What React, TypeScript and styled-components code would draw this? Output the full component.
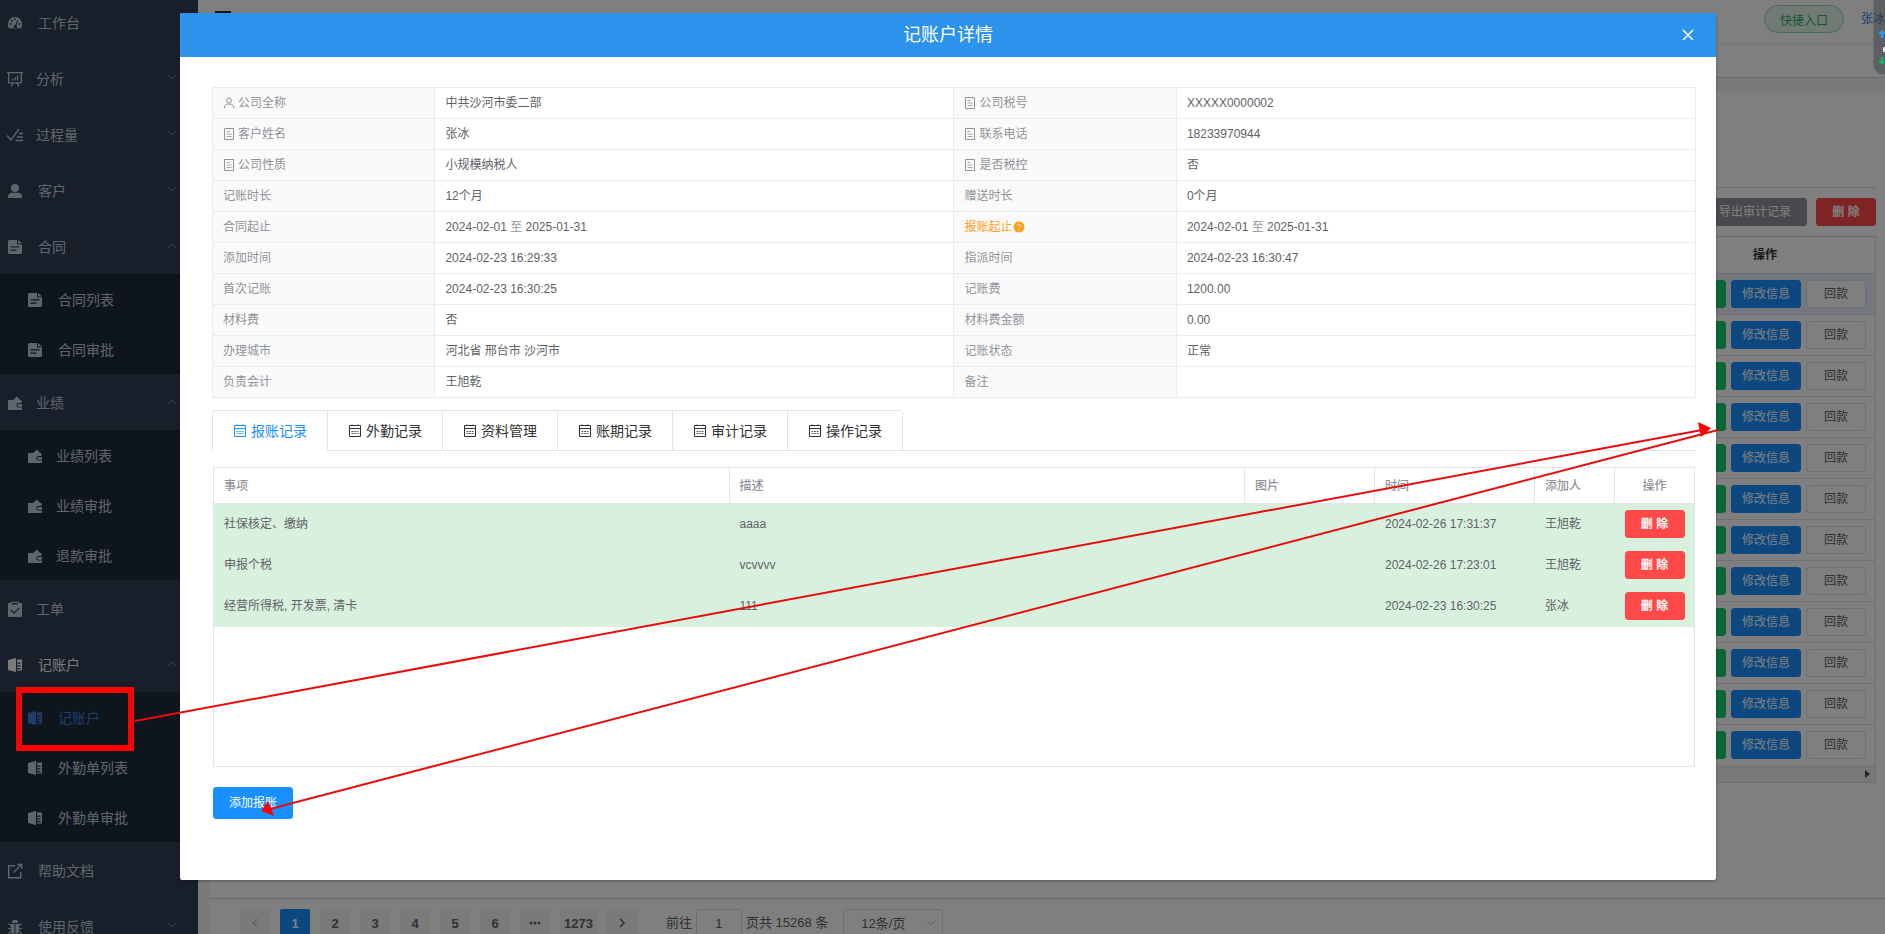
import React from 'react';
import styled, { createGlobalStyle, css } from 'styled-components';

const GlobalStyle = createGlobalStyle`
  *, *::before, *::after { box-sizing: border-box; }
  html, body { margin: 0; }
  body, button, input, select, table {
    font-family: "Liberation Sans", "Noto Sans CJK SC", sans-serif;
    font-size: 12px;
  }
  body { line-height: 20px; color: #606266; overflow: hidden; }
  button { cursor: pointer; }
`;

/* ---------- page shell ---------- */

const Page = styled.div`
  position: relative;
  display: flex;
  height: 100vh;
  overflow: hidden;
  background: #f5f5f6;
`;

const Sidebar = styled.nav`
  flex: none;
  width: 198px;
  overflow: hidden;
  background: #333f54;
`;

const Menu = styled.ul`
  list-style: none;
  margin: -6px 0 0;
  padding: 0;
`;

const SubMenu = styled.ul`
  list-style: none;
  margin: 0;
  padding: 0;
  background: #1f2b39;
`;

const MenuLink = styled.a<{ $sub?: boolean; $tight?: boolean; $tone?: 'active' | 'open' }>`
  display: flex;
  align-items: center;
  height: ${p => (p.$sub ? 50 : 56)}px;
  padding: 2px 21px 0 ${p => (p.$sub ? 27 : 7)}px;
  gap: ${p => (p.$tight ? 13 : 15)}px;
  font-size: 14px;
  text-decoration: none;
  color: ${p => (p.$tone === 'active' ? '#3a7fd4' : p.$tone === 'open' ? '#f4f4f5' : '#bfcbd9')};
  svg { flex: none; }
  span { flex: 1; }
`;

const Main = styled.div`
  flex: 1;
  min-width: 0;
  display: flex;
  flex-direction: column;
`;

const TopBar = styled.header`
  display: flex;
  align-items: center;
  height: 45px;
  padding: 0 0 6px 17px;
  background: #fff;
  border-bottom: 1px solid #ececf0;
`;

const MenuToggle = styled.button`
  display: flex;
  padding: 0;
  border: 0;
  background: none;
  margin-right: auto;
`;

const QuickEntry = styled.button`
  width: 80px;
  height: 28px;
  margin-right: 17px;
  padding: 0;
  border: 1px solid #8ed9ab;
  border-radius: 14px;
  background: #e2f6ea;
  color: #2fae62;
`;

const UserLink = styled.a`
  white-space: nowrap;
  text-decoration: none;
  color: #2878d8;
`;

const TagsBar = styled.div`
  height: 33px;
  background: #fff;
  border-bottom: 1px solid #d0d3d9;
`;

const Panel = styled.section`
  flex: 1;
  margin: 15px 0 0 12px;
  padding: 0 9px 0 3px;
  background: #fff;
`;

const Filters = styled.div`
  height: 95px;
  border-bottom: 1px solid #d9dbe0;
`;

const Toolbar = styled.div`
  display: flex;
  justify-content: flex-end;
  gap: 9px;
  padding: 10px 0;
`;

type Kind = 'primary' | 'success' | 'danger' | 'info' | 'plain';
const fills: Record<Kind, string> = {
  primary: '#1890ff',
  success: '#13ce66',
  danger: '#ff4949',
  info: '#909399',
  plain: '#fff',
};

const Button = styled.button<{ $kind: Kind; $width: number; $tall?: boolean }>`
  flex: none;
  width: ${p => p.$width}px;
  height: ${p => (p.$tall ? 32 : 28)}px;
  padding: 0;
  line-height: 20px;
  border: 1px solid ${p => (p.$kind === 'plain' ? '#dcdfe6' : fills[p.$kind])};
  border-radius: 3px;
  background: ${p => fills[p.$kind]};
  color: ${p => (p.$kind === 'plain' ? '#606266' : '#fff')};
  font-weight: ${p => (p.$kind === 'danger' ? 700 : 400)};
`;

const ListFrame = styled.div`
  border: 1px solid #dfe3ec;
  border-top-color: #d0d3d9;
`;

const ListTable = styled.table`
  width: 100%;
  table-layout: fixed;
  border-collapse: separate;
  border-spacing: 0;
  th {
    height: 37px;
    padding: 0;
    color: #303133;
    border-bottom: 1px solid #dfe3ec;
  }
  td {
    height: 41px;
    padding: 0;
    border-bottom: 1px solid #dfe3ec;
  }
  tbody tr:first-child td { background: #e8f0fc; }
  tbody tr:last-child td { height: 40px; border-bottom: 0; }
`;

const ActionGroup = styled.div`
  display: flex;
  justify-content: flex-end;
  gap: 5px;
  padding-right: 9px;
`;

const ScrollTrack = styled.div`
  display: flex;
  justify-content: flex-end;
  align-items: center;
  height: 17px;
  padding-right: 5px;
  background: #f1f1f1;
`;

const Footer = styled.footer`
  display: flex;
  gap: 10px;
  height: 36px;
  margin-left: 12px;
  padding: 10px 0 0 30px;
  background: #fff;
  border-top: 1px solid #d0d3d9;
  font-size: 13px;
  line-height: 28px;
`;

const PageButton = styled.button<{ $active?: boolean }>`
  flex: none;
  display: flex;
  align-items: center;
  justify-content: center;
  min-width: 30px;
  height: 28px;
  padding: 0 4px;
  border: 0;
  border-radius: 2px;
  background: ${p => (p.$active ? '#1890ff' : '#f4f4f5')};
  color: ${p => (p.$active ? '#fff' : '#606266')};
  font-size: 13px;
  font-weight: 700;
`;

const Jump = styled.label`
  display: flex;
  gap: 4px;
  margin-left: 19px;
  white-space: nowrap;
`;

const JumpInput = styled.input`
  width: 46px;
  height: 28px;
  padding: 0;
  text-align: center;
  color: #606266;
  font-size: 13px;
  border: 1px solid #dcdfe6;
  border-radius: 3px;
`;

const SelectBox = styled.div`
  position: relative;
  margin-left: 5px;
  svg {
    position: absolute;
    right: 7px;
    top: 9px;
    pointer-events: none;
  }
`;

const SizeSelect = styled.select`
  appearance: none;
  display: block;
  width: 100px;
  height: 28px;
  padding: 0 0 0 17px;
  color: #606266;
  font-size: 13px;
  background: #fff;
  border: 1px solid #dcdfe6;
  border-radius: 3px;
`;

/* ---------- dialog ---------- */

const Overlay = styled.div`
  position: absolute;
  inset: 0;
  padding: 13px 169px 0 180px;
  background: rgba(0, 0, 0, 0.5);
`;

const Dialog = styled.section`
  background: #fff;
  border-radius: 2px;
  box-shadow: 0 1px 3px rgba(0, 0, 0, 0.3);
`;

const DialogHeader = styled.header`
  display: grid;
  grid-template-columns: 56px 1fr 56px;
  align-items: center;
  height: 44px;
  background: #2d92eb;
  color: #fff;
  h2 {
    margin: 0;
    font-size: 18px;
    font-weight: 400;
    line-height: 24px;
    text-align: center;
  }
`;

const CloseButton = styled.button`
  display: flex;
  justify-content: center;
  padding: 4px;
  border: 0;
  background: none;
  color: #fff;
`;

const DialogBody = styled.div`
  padding: 30px 20px 61px 32px;
`;

const DetailTable = styled.table`
  width: 100%;
  table-layout: fixed;
  border-collapse: collapse;
  th, td {
    height: 31px;
    padding: 0 10px;
    border: 1px solid #e6ebf5;
    text-align: left;
    font-weight: 400;
  }
  th { width: 15%; background: #fafafa; color: #909399; }
  td { width: 35%; }
`;

const LabelText = styled.span<{ $accent?: boolean }>`
  display: flex;
  align-items: center;
  gap: ${p => (p.$accent ? 0 : 3)}px;
  ${p => p.$accent && css`color: #ff9d1c;`}
`;

const Muted = styled.span`
  color: #909399;
`;

const TabRow = styled.div`
  display: flex;
  margin-top: 12px;
  border-bottom: 1px solid #dfe4ed;
`;

const TabList = styled.div`
  display: flex;
  margin-bottom: -1px;
  border: 1px solid #dfe4ed;
  border-bottom: 0;
  border-radius: 4px 4px 0 0;
`;

const Tab = styled.button<{ $active?: boolean }>`
  display: flex;
  align-items: center;
  gap: 4px;
  height: 40px;
  padding: 0 20px;
  border: 0;
  border-bottom: 1px solid ${p => (p.$active ? '#fff' : '#dfe4ed')};
  border-radius: 4px 4px 0 0;
  background: #fff;
  color: ${p => (p.$active ? '#1890ff' : '#303133')};
  font-size: 14px;
  line-height: 20px;
  white-space: nowrap;
  & + & { border-left: 1px solid #dfe4ed; border-radius: 0; }
`;

const RecordFrame = styled.div`
  min-height: 300px;
  margin: 16px 1px 0;
  border: 1px solid #e1e4ea;
`;

const RecordTable = styled.table`
  width: 100%;
  table-layout: fixed;
  border-collapse: separate;
  border-spacing: 0;
  th, td {
    padding: 0 10px;
    text-align: left;
    border-bottom: 1px solid #dfe6ec;
    border-right: 1px solid #dfe6ec;
  }
  th { height: 36px; color: #909399; font-weight: 500; }
  td { height: 41px; background: #d8f1df; border-color: #dbefe1; }
  th:last-child, td:last-child { padding: 0 9px; text-align: center; border-right: 0; }
`;

const AddRow = styled.div`
  margin: 20px 1px 0;
`;

const NetWidget = styled.aside`
  position: absolute;
  top: 0;
  right: 0;
  display: flex;
  flex-direction: column;
  align-items: flex-end;
  width: 11px;
  height: 74px;
  padding-top: 29px;
  background: rgba(60, 64, 70, 0.5);
  border-radius: 0 0 0 9px;
  box-shadow: 0 0 2px rgba(0, 0, 0, 0.4);
`;

const Annotations = styled.svg`
  position: absolute;
  inset: 0;
  width: 100%;
  height: 100%;
  pointer-events: none;
`;

/* ---------- icons ---------- */

type IconName = 'gauge' | 'board' | 'steps' | 'user' | 'doc' | 'wallet' | 'clip' | 'book' | 'external' | 'bug';

const glyphs: Record<IconName, React.ReactNode> = {
  gauge: (
    <path
      fillRule="evenodd"
      d="M8 2a7 7 0 0 0-7 7c0 2 .3 3 .9 4.300h12.200c.6-1.300.9-2.300.9-4.300a7 7 0 0 0-7-7zM3.700 8a1 1 0 1 1 0 2 1 1 0 0 1 0-2zM4.900 4.800a1 1 0 1 1 0 2 1 1 0 0 1 0-2zM8 3.300a1 1 0 1 1 0 2 1 1 0 0 1 0-2zM12.300 8a1 1 0 1 1 0 2 1 1 0 0 1 0-2zM10.200 5l.9.400-1.700 5a1.700 1.700 0 1 1-1.100-.3z"
    />
  ),
  board: (
    <g fill="none" stroke="currentColor" strokeWidth="1.300">
      <path d="M0 1.600h16M1.700 1.600v10.200h12.600V1.600M6 12l-2 3.500M10 12l2 3.500" />
      <path d="M5.400 9.500V7.500M8 9.500V6M10.600 9.500V4.500" />
    </g>
  ),
  steps: (
    <g fill="none" stroke="currentColor" strokeWidth="1.300">
      <path d="M0 8.500l4 4.500L12 2M12 6.500h4M10 10h6M8.500 13.500h7.500" />
    </g>
  ),
  user: <path d="M8 1a4 4 0 1 1 0 8 4 4 0 0 1 0-8zM1 15v-1.500C1 11 3 9.700 5 9.700h6c2 0 4 1.300 4 3.800V15z" />,
  doc: (
    <path
      fillRule="evenodd"
      d="M2.500 1H10v4.500h5V13.500a1.500 1.500 0 0 1-1.500 1.500h-11A1.500 1.500 0 0 1 1 13.500v-11A1.500 1.500 0 0 1 2.500 1zM11 1l4 3.600h-4zM3.500 7.300v1.200h9V7.300zM3.500 10.500v1.200h6v-1.200z"
    />
  ),
  wallet: (
    <path
      fillRule="evenodd"
      d="M1 5h5l4-3.500L13 5h1.500v3h-3a2 2 0 0 0 0 4.500H15v2a.6.6 0 0 1-.6.500H1.600a.6.6 0 0 1-.6-.5zM11.500 9H15v2.700h-3.500a1.300 1.300 0 0 1 0-2.700z"
    />
  ),
  clip: (
    <path
      fillRule="evenodd"
      d="M1 2h3V.8h8V2h3v14H1zM5 2v1.500h6V2zM4.300 8.500l-.9.900L7 13l5.700-5.700-.9-.9L7 11.200z"
    />
  ),
  book: (
    <path
      fillRule="evenodd"
      d="M1 3l8-2v14l-8-2zM10 2.500h5v11h-5v-1.300h3.500v-1.200H10V9.500h3.500V8.300H10V6.700h3.500V5.500H10z"
    />
  ),
  external: (
    <g fill="none" stroke="currentColor" strokeWidth="1.400">
      <path d="M8 2.700H1.700v12h12V9M6.500 9.500l8-8M10 1.500h4.700V6" />
    </g>
  ),
  bug: (
    <g>
      <path d="M4.800 4a3.200 3.200 0 0 1 6.400 0zM3.800 5h3.700v10C5 15 3.800 13 3.800 11zM8.500 5h3.700v6c0 2-1.200 4-3.700 4z" />
      <path d="M1.500 4.500L4 6.500M14.500 4.500L12 6.500M.8 9.500h3M15.200 9.500h-3M1.500 14.500L4 12.500M14.500 14.500L12 12.500" stroke="currentColor" strokeWidth="1.200" />
    </g>
  ),
};

const MenuIcon = ({ name }: { name: IconName }) => (
  <svg width="16" height="16" viewBox="0 0 16 16" fill="currentColor" aria-hidden="true">
    {glyphs[name]}
  </svg>
);

const Chevron = ({ up }: { up?: boolean }) => (
  <svg width="10" height="12" viewBox="0 0 10 12" fill="none" stroke="#7c8592" aria-hidden="true">
    <path d={up ? 'M1 7l4-4 4 4' : 'M1 2l4 4 4-4'} />
  </svg>
);

const PersonIcon = () => (
  <svg width="12" height="12" viewBox="0 0 12 12" fill="none" stroke="currentColor" aria-hidden="true">
    <circle cx="6" cy="3.500" r="2.500" />
    <path d="M1.500 11V9.800C1.500 8 3 7.200 4.500 7.200h3c1.500 0 3 .8 3 2.600V11" />
  </svg>
);

const TicketIcon = () => (
  <svg width="12" height="12" viewBox="0 0 12 12" fill="none" stroke="currentColor" aria-hidden="true">
    <path d="M1.500.5h9v11h-9z" />
    <path d="M3.500 3.500h3M3.500 6h5M3.500 8.500h5" strokeWidth=".8" />
  </svg>
);

const HelpIcon = () => (
  <svg width="12" height="12" viewBox="0 0 12 12" aria-hidden="true">
    <circle cx="6" cy="6" r="5.500" fill="#ff9d1c" />
    <path d="M4.500 4.800a1.500 1.500 0 1 1 2.200 1.300c-.5.300-.7.500-.7 1.100M6 8.200v1" fill="none" stroke="#fff" />
  </svg>
);

const CalendarIcon = () => (
  <svg width="14" height="14" viewBox="0 0 14 14" fill="none" stroke="currentColor" aria-hidden="true">
    <path d="M1.500 1.500h11v11h-11zM1.500 4.500h11" />
    <path d="M4 .5v1M10 .5v1" />
    <path d="M3.500 7.500h7M3.500 9.500h7" strokeDasharray="1.800 .8" strokeWidth=".8" />
  </svg>
);

/* ---------- data ---------- */

interface Item {
  label: string;
  icon: IconName;
  tight?: boolean;
  arrow?: boolean;
  tone?: 'active' | 'open';
  children?: Item[];
}

const menu: Item[] = [
  { label: '工作台', icon: 'gauge' },
  { label: '分析', icon: 'board', tight: true, arrow: true },
  { label: '过程量', icon: 'steps', tight: true, arrow: true },
  { label: '客户', icon: 'user', arrow: true },
  {
    label: '合同', icon: 'doc', arrow: true,
    children: [{ label: '合同列表', icon: 'doc' }, { label: '合同审批', icon: 'doc' }],
  },
  {
    label: '业绩', icon: 'wallet', tight: true, arrow: true,
    children: [
      { label: '业绩列表', icon: 'wallet', tight: true },
      { label: '业绩审批', icon: 'wallet', tight: true },
      { label: '退款审批', icon: 'wallet', tight: true },
    ],
  },
  { label: '工单', icon: 'clip', tight: true },
  {
    label: '记账户', icon: 'book', arrow: true, tone: 'open',
    children: [
      { label: '记账户', icon: 'book', tone: 'active' },
      { label: '外勤单列表', icon: 'book' },
      { label: '外勤单审批', icon: 'book' },
    ],
  },
  { label: '帮助文档', icon: 'external' },
  { label: '使用反馈', icon: 'bug', arrow: true },
];

interface Field {
  label: string;
  value: React.ReactNode;
  icon?: 'person' | 'ticket';
  help?: boolean;
}

const period = <>2024-02-01 <Muted>至</Muted> 2025-01-31</>;

const details: [Field, Field][] = [
  [{ label: '公司全称', icon: 'person', value: '中共沙河市委二部' }, { label: '公司税号', icon: 'ticket', value: 'XXXXX0000002' }],
  [{ label: '客户姓名', icon: 'ticket', value: '张冰' }, { label: '联系电话', icon: 'ticket', value: '18233970944' }],
  [{ label: '公司性质', icon: 'ticket', value: '小规模纳税人' }, { label: '是否税控', icon: 'ticket', value: '否' }],
  [{ label: '记账时长', value: '12个月' }, { label: '赠送时长', value: '0个月' }],
  [{ label: '合同起止', value: period }, { label: '报账起止', help: true, value: period }],
  [{ label: '添加时间', value: '2024-02-23 16:29:33' }, { label: '指派时间', value: '2024-02-23 16:30:47' }],
  [{ label: '首次记账', value: '2024-02-23 16:30:25' }, { label: '记账费', value: '1200.00' }],
  [{ label: '材料费', value: '否' }, { label: '材料费金额', value: '0.00' }],
  [{ label: '办理城市', value: '河北省 邢台市 沙河市' }, { label: '记账状态', value: '正常' }],
  [{ label: '负责会计', value: '王旭乾' }, { label: '备注', value: '' }],
];

const tabs = ['报账记录', '外勤记录', '资料管理', '账期记录', '审计记录', '操作记录'];

const records = [
  { item: '社保核定、缴纳', desc: 'aaaa', time: '2024-02-26 17:31:37', by: '王旭乾' },
  { item: '申报个税', desc: 'vcvvvv', time: '2024-02-26 17:23:01', by: '王旭乾' },
  { item: '经营所得税, 开发票, 清卡', desc: '111', time: '2024-02-23 16:30:25', by: '张冰' },
];

/* ---------- parts ---------- */

const MenuEntry = ({ item, sub }: { item: Item; sub?: boolean }) => (
  <li>
    <MenuLink href="#" $sub={sub} $tight={item.tight} $tone={item.tone}>
      <MenuIcon name={item.icon} />
      <span>{item.label}</span>
      {item.arrow && <Chevron up={!!item.children} />}
    </MenuLink>
    {item.children && (
      <SubMenu>
        {item.children.map(child => <MenuEntry key={child.label} item={child} sub />)}
      </SubMenu>
    )}
  </li>
);

const DetailCells = ({ field }: { field: Field }) => (
  <>
    <th scope="row">
      <LabelText $accent={field.help}>
        {field.icon === 'person' && <PersonIcon />}
        {field.icon === 'ticket' && <TicketIcon />}
        {field.label}
        {field.help && <HelpIcon />}
      </LabelText>
    </th>
    <td>{field.value}</td>
  </>
);

const AccountList = () => (
  <Panel>
    <Filters />
    <Toolbar>
      <Button $kind="info" $width={104}>导出审计记录</Button>
      <Button $kind="danger" $width={60}>删 除</Button>
    </Toolbar>
    <ListFrame>
      <ListTable>
        <colgroup>
          <col />
          <col width="220" />
        </colgroup>
        <thead>
          <tr><th /><th scope="col">操作</th></tr>
        </thead>
        <tbody>
          {Array.from({ length: 12 }, (_, i) => (
            <tr key={i}>
              <td />
              <td>
                <ActionGroup>
                  <Button $kind="success" $width={60} aria-label="详情" />
                  <Button $kind="primary" $width={70}>修改信息</Button>
                  <Button $kind="plain" $width={60}>回款</Button>
                </ActionGroup>
              </td>
            </tr>
          ))}
        </tbody>
      </ListTable>
      <ScrollTrack>
        <svg width="5" height="8" viewBox="0 0 5 8" aria-hidden="true"><path d="M0 0l5 4-5 4z" fill="#505050" /></svg>
      </ScrollTrack>
    </ListFrame>
  </Panel>
);

const Pagination = () => (
  <Footer>
    <PageButton aria-label="上一页">
      <svg width="10" height="12" viewBox="0 0 10 12" fill="none" stroke="#c0c4cc" strokeWidth="1.500"><path d="M7 2L3 6l4 4" /></svg>
    </PageButton>
    {[1, 2, 3, 4, 5, 6].map(n => <PageButton key={n} $active={n === 1}>{n}</PageButton>)}
    <PageButton aria-label="更多">
      <svg width="12" height="4" viewBox="0 0 12 4" fill="currentColor"><circle cx="2" cy="2" r="1.500" /><circle cx="6" cy="2" r="1.500" /><circle cx="10" cy="2" r="1.500" /></svg>
    </PageButton>
    <PageButton>1273</PageButton>
    <PageButton aria-label="下一页">
      <svg width="10" height="12" viewBox="0 0 10 12" fill="none" stroke="currentColor" strokeWidth="1.500"><path d="M3 2l4 4-4 4" /></svg>
    </PageButton>
    <Jump>
      前往
      <JumpInput defaultValue="1" />
      页共 15268 条
    </Jump>
    <SelectBox>
      <SizeSelect aria-label="每页条数"><option>12条/页</option></SizeSelect>
      <svg width="10" height="10" viewBox="0 0 10 10" fill="none" stroke="#c0c4cc"><path d="M1 3l4 4 4-4" /></svg>
    </SelectBox>
  </Footer>
);

const AccountDialog = () => (
  <Dialog role="dialog" aria-labelledby="dialog-title">
    <DialogHeader>
      <span />
      <h2 id="dialog-title">记账户详情</h2>
      <CloseButton aria-label="关闭">
        <svg width="12" height="12" viewBox="0 0 12 12" fill="none" stroke="currentColor" strokeWidth="1.500"><path d="M1 1l10 10M11 1L1 11" /></svg>
      </CloseButton>
    </DialogHeader>
    <DialogBody>
      <DetailTable>
        <tbody>
          {details.map(([left, right]) => (
            <tr key={left.label}>
              <DetailCells field={left} />
              <DetailCells field={right} />
            </tr>
          ))}
        </tbody>
      </DetailTable>
      <TabRow>
        <TabList role="tablist">
          {tabs.map((label, i) => (
            <Tab key={label} role="tab" aria-selected={i === 0} $active={i === 0}>
              <CalendarIcon />
              {label}
            </Tab>
          ))}
        </TabList>
      </TabRow>
      <RecordFrame>
        <RecordTable>
          <colgroup>
            <col /><col /><col width="130" /><col width="160" /><col width="80" /><col width="79" />
          </colgroup>
          <thead>
            <tr>
              {['事项', '描述', '图片', '时间', '添加人', '操作'].map(h => <th key={h} scope="col">{h}</th>)}
            </tr>
          </thead>
          <tbody>
            {records.map(r => (
              <tr key={r.time}>
                <td>{r.item}</td>
                <td>{r.desc}</td>
                <td />
                <td>{r.time}</td>
                <td>{r.by}</td>
                <td><Button $kind="danger" $width={60}>删 除</Button></td>
              </tr>
            ))}
          </tbody>
        </RecordTable>
      </RecordFrame>
      <AddRow>
        <Button $kind="primary" $width={80} $tall>添加报账</Button>
      </AddRow>
    </DialogBody>
  </Dialog>
);

export default function App() {
  return (
    <Page>
      <GlobalStyle />
      <Sidebar>
        <Menu>
          {menu.map(item => <MenuEntry key={item.label} item={item} />)}
        </Menu>
      </Sidebar>
      <Main>
        <TopBar>
          <MenuToggle aria-label="折叠菜单">
            <svg width="16" height="16" viewBox="0 0 16 16" fill="#222b3a"><path d="M0 0h16v2H0zM0 7h16v2H0zM0 14h16v2H0z" /></svg>
          </MenuToggle>
          <QuickEntry>快捷入口</QuickEntry>
          <UserLink href="#">张冰</UserLink>
        </TopBar>
        <TagsBar />
        <AccountList />
        <Pagination />
      </Main>
      <Overlay>
        <AccountDialog />
      </Overlay>
      <NetWidget>
        <svg width="7" height="38" viewBox="0 0 7 38" aria-hidden="true">
          <path d="M4 1l4 4H5.200v4H2.800V5H0z" fill="#1fa2e8" />
          <rect x="5" y="18" width="3" height="5" rx="1" fill="#e8e8e8" />
          <path d="M4 36l4-4H5.200v-4H2.800v4H0z" fill="#13b765" />
        </svg>
      </NetWidget>
      <Annotations aria-hidden="true">
        <g stroke="#e80c0c" strokeWidth="2">
          <path d="M135 721L1702 430" />
          <path d="M1718 430L270 809" />
        </g>
        <path d="M1711 428l-13-6 3 15zM261 811l7-10 6 15z" fill="#f00" />
        <rect x="19" y="690" width="112" height="58" fill="none" stroke="#f00" strokeWidth="6" />
      </Annotations>
    </Page>
  );
}
